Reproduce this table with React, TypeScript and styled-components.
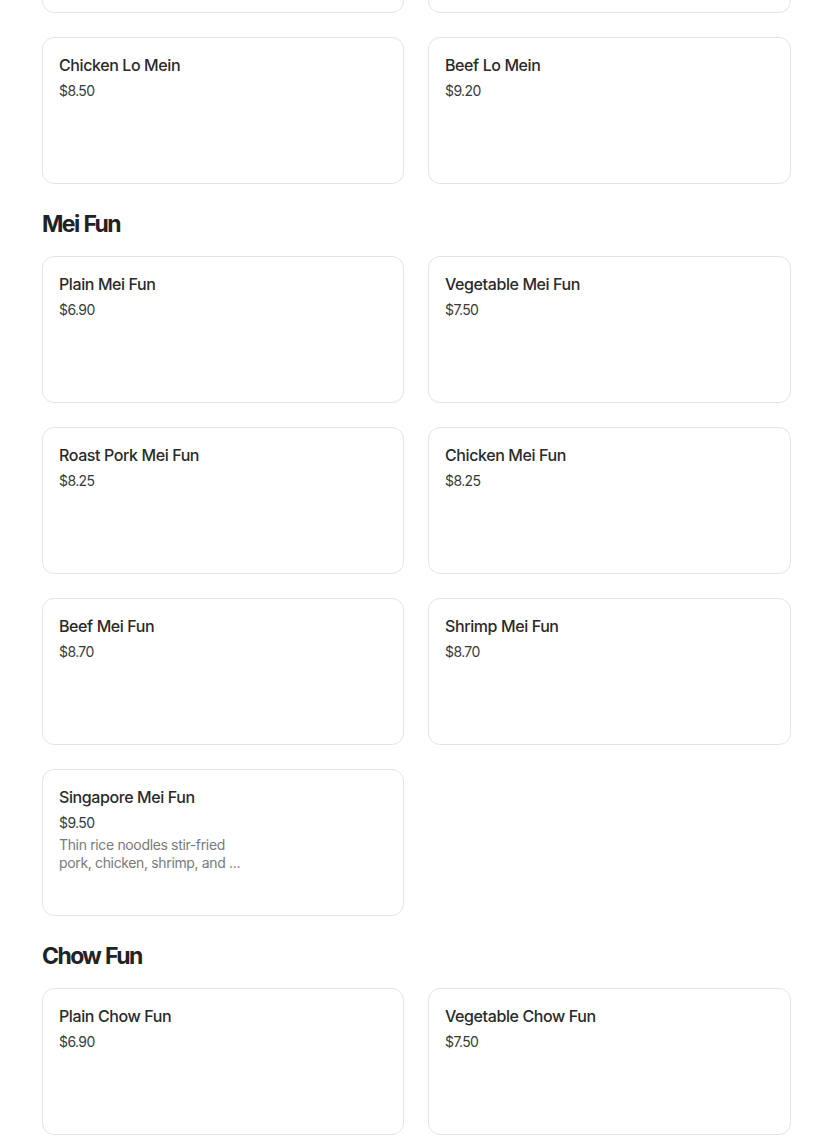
import styled, { createGlobalStyle } from 'styled-components';

const GlobalStyle = createGlobalStyle`
  html, body {
    margin: 0;
    padding: 0;
    background: #ffffff;
    font-family: Inter, "Noto Sans", sans-serif;
    color: #222222;
  }
`;

type MenuItem = {
  name: string;
  price: string;
  description?: string;
};

type Section = {
  title?: string;
  items: MenuItem[];
};

const sections: Section[] = [
  {
    items: [
      { name: 'Roast Pork Lo Mein', price: '$8.50' },
      { name: 'Shrimp Lo Mein', price: '$9.20' },
      { name: 'Chicken Lo Mein', price: '$8.50' },
      { name: 'Beef Lo Mein', price: '$9.20' },
    ],
  },
  {
    title: 'Mei Fun',
    items: [
      { name: 'Plain Mei Fun', price: '$6.90' },
      { name: 'Vegetable Mei Fun', price: '$7.50' },
      { name: 'Roast Pork Mei Fun', price: '$8.25' },
      { name: 'Chicken Mei Fun', price: '$8.25' },
      { name: 'Beef Mei Fun', price: '$8.70' },
      { name: 'Shrimp Mei Fun', price: '$8.70' },
      {
        name: 'Singapore Mei Fun',
        price: '$9.50',
        description: 'Thin rice noodles stir-fried pork, chicken, shrimp, and\u00a0...',
      },
    ],
  },
  {
    title: 'Chow Fun',
    items: [
      { name: 'Plain Chow Fun', price: '$6.90' },
      { name: 'Vegetable Chow Fun', price: '$7.50' },
      { name: 'Roast Pork Chow Fun', price: '$8.25' },
      { name: 'Chicken Chow Fun', price: '$8.25' },
    ],
  },
];

const Page = styled.main`
  width: 749px;
  padding-left: 42px;
  margin-top: -134px;
  display: flex;
  flex-direction: column;
  gap: 24px;
`;

const SectionBlock = styled.section`
  display: flex;
  flex-direction: column;
  gap: 16px;
`;

const SectionTitle = styled.h2`
  margin: 0;
  font-size: 23px;
  line-height: 32px;
  font-weight: 700;
  letter-spacing: -1.6px;
  word-spacing: 1px;
  color: #222222;
`;

const CardGrid = styled.ul`
  list-style: none;
  margin: 0;
  padding: 0;
  display: grid;
  grid-template-columns: 362px 363px;
  gap: 24px;
`;

const Card = styled.li`
  box-sizing: border-box;
  height: 147px;
  padding: 15px 16px 16px;
  border: 1px solid #e4e4e4;
  border-radius: 12px;
  background: #ffffff;
  display: flex;
  flex-direction: column;
  align-items: flex-start;
`;

const ItemName = styled.span`
  font-size: 16px;
  line-height: 24px;
  font-weight: 500;
  letter-spacing: -0.4px;
  color: #2a2a2a;
`;

const ItemPrice = styled.span`
  margin-top: 4px;
  font-size: 14px;
  line-height: 20px;
  font-weight: 400;
  letter-spacing: -0.6px;
  color: #3a3a3a;
`;

const ItemDescription = styled.span`
  margin-top: 3px;
  max-width: 190px;
  font-size: 14px;
  line-height: 18px;
  font-weight: 400;
  letter-spacing: -0.35px;
  color: #7a7a7a;
`;

export default function App() {
  return (
    <>
      <GlobalStyle />
      <Page>
        {sections.map((section, i) => (
          <SectionBlock key={i}>
            {section.title && <SectionTitle>{section.title}</SectionTitle>}
            <CardGrid>
              {section.items.map((item) => (
                <Card key={item.name}>
                  <ItemName>{item.name}</ItemName>
                  <ItemPrice>{item.price}</ItemPrice>
                  {item.description && <ItemDescription>{item.description}</ItemDescription>}
                </Card>
              ))}
            </CardGrid>
          </SectionBlock>
        ))}
      </Page>
    </>
  );
}
